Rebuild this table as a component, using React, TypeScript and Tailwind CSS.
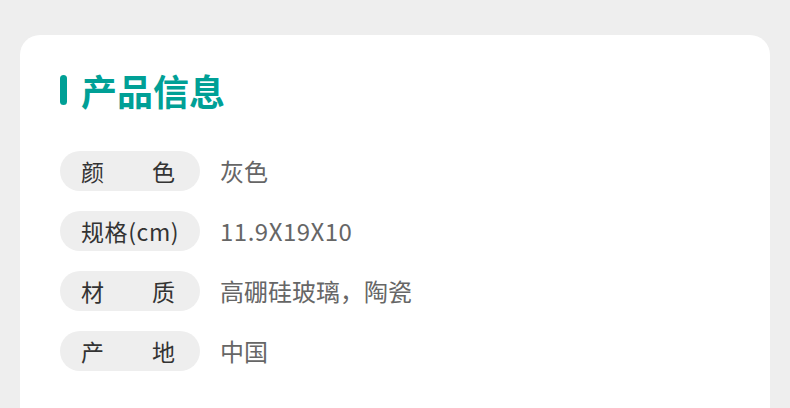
const rows: { label: string[]; value: string; latin?: boolean }[] = [
  { label: ['颜', '色'], value: '灰色' },
  { label: ['规格(cm)'], value: '11.9X19X10', latin: true },
  { label: ['材', '质'], value: '高硼硅玻璃，陶瓷' },
  { label: ['产', '地'], value: '中国' },
];

export default function App() {
  return (
    <div
      className="w-[790px] h-[408px] overflow-hidden bg-[#eeeeee] pt-[35px] px-5"
      style={{ fontFamily: '"Noto Sans CJK SC", "Noto Sans", sans-serif' }}
    >
      <div className="h-[420px] bg-white rounded-[20px] pl-10 pt-[37px]">
        {/* Title */}
        <div className="flex items-center gap-[14px] h-[36px]">
          <div className="w-[7px] h-[30px] rounded-full bg-[#00a096]" />
          <h2 className="text-[36px] leading-none font-bold text-[#00a096]">产品信息</h2>
        </div>

        <div className="mt-[43px] flex flex-col gap-5">
          {rows.map((r) => (
            <div key={r.value} className="flex items-center h-[40px]">
              <div className="w-[140px] h-[40px] shrink-0 rounded-full bg-[#eeeeee] pl-[21px] pr-[25px] flex items-center justify-between whitespace-nowrap leading-none text-[23px] text-[#333333]">
                {r.label.map((l) => (
                  <span key={l} className={r.label.length === 1 ? 'tracking-[0.6px]' : ''}>
                    {l}
                  </span>
                ))}
              </div>
              <span
                className={`ml-5 text-[24px] leading-none whitespace-nowrap text-[#666666] ${
                  r.latin ? 'tracking-[0.5px]' : ''
                }`}
              >
                {r.value}
              </span>
            </div>
          ))}
        </div>
      </div>
    </div>
  );
}
